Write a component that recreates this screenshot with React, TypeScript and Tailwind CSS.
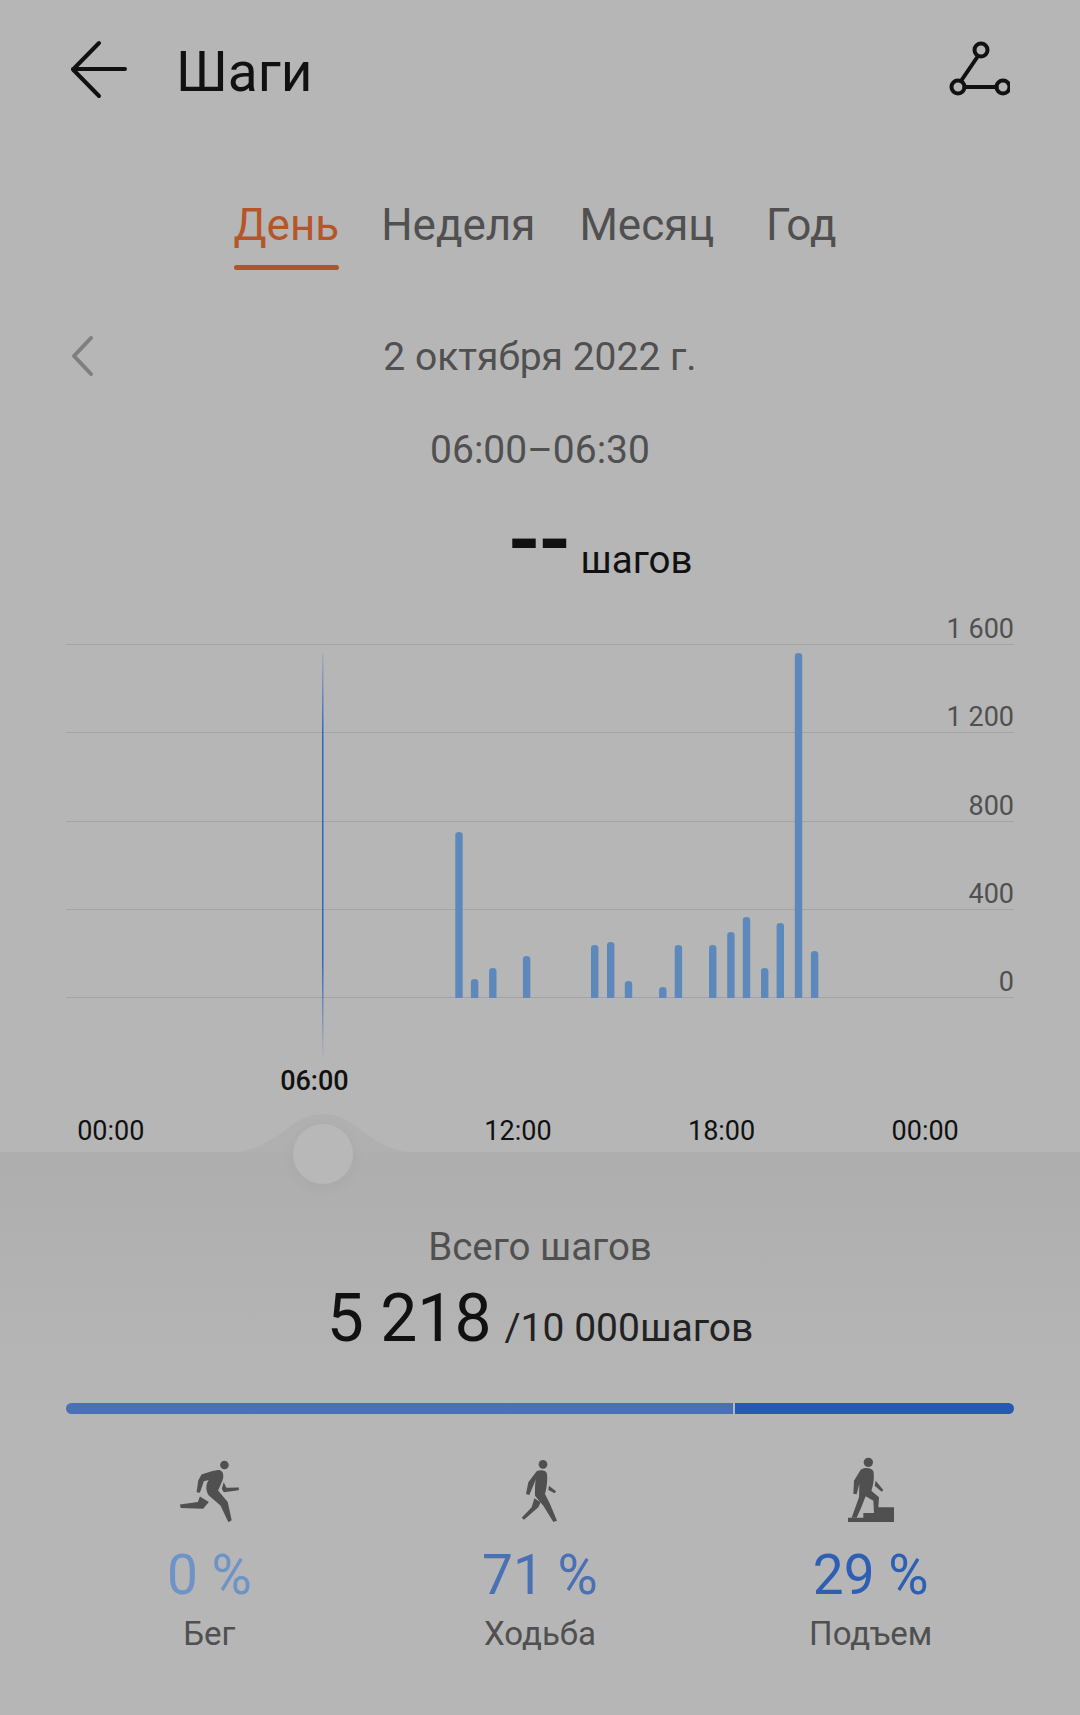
const bars: [number, number][] = [
  [459, 832], [474.6, 979], [492.8, 968], [526.6, 956], [594.7, 945], [610.7, 942], [628.5, 981], [662.8, 987],
  [678.4, 945], [712.7, 945], [730.9, 932], [746.5, 917], [764.7, 968], [780.3, 923], [798.5, 653], [814.6, 951],
];

const yLabels = ["1 600", "1 200", "800", "400", "0"];

function BackIcon() {
  return (
    <svg width="60" height="60" viewBox="70 40 60 60" fill="none" stroke="#111" strokeWidth="4" strokeLinecap="round" strokeLinejoin="round">
      <path d="M99 43 L73 69.5 L99 96 M73 69 H125" />
    </svg>
  );
}

function RouteIcon() {
  return (
    <svg width="62" height="62" viewBox="950 38 62 62" fill="none" stroke="#111" strokeWidth="4" strokeLinecap="round">
      <circle cx="983" cy="50" r="6.5" />
      <circle cx="960" cy="87" r="6.5" />
      <circle cx="1005" cy="87" r="6.5" />
      <path d="M980 56 L963 81 M966.5 87 H998.5" />
    </svg>
  );
}

function RunIcon() {
  return (
    <svg width="61" height="63" viewBox="115 58 184 190" fill="#505050">
      <circle cx="252" cy="73" r="13" />
      <path d="M183 102 C200 95 225 88 236 88 C248 90 252 105 246 120 L233 150 L262 185 L274 240 L264 246 L240 195 L205 165 C195 150 195 130 205 118 L190 122 L178 157 L168 155 L173 120 Z" />
      <path d="M178 168 L205 185 L188 205 L120 203 L118 192 L172 185 Z" />
      <path d="M250 125 L258 142 L296 141 L295 149 L250 155 L244 145 Z" />
    </svg>
  );
}

function WalkIcon() {
  return (
    <svg width="37" height="64" viewBox="123 60 111 192" fill="#505050">
      <circle cx="189" cy="76" r="13" />
      <path d="M170 97 C180 92 197 93 200 102 C204 115 200 150 195 165 L210 195 L231 245 L220 249 L190 200 L165 170 C165 150 165 130 168 120 L148 168 L138 165 L145 130 Z" />
      <path d="M163 178 L182 190 L175 205 L132 242 L125 236 L155 205 Z" />
      <path d="M207 140 L228 157 L224 163 L205 153 Z" />
    </svg>
  );
}

function ClimbIcon() {
  return (
    <svg width="48" height="66" viewBox="1100 54 142 198" fill="#505050">
      <circle cx="1163" cy="70" r="14" />
      <path d="M1140 92 C1150 85 1172 85 1178 97 C1182 115 1178 140 1172 155 L1195 175 L1192 222 L1180 222 L1178 185 L1155 172 L1142 205 L1128 236 L1113 236 L1135 175 L1136 135 L1128 166 L1118 164 L1120 125 Z" />
      <path d="M1185 125 L1208 153 L1203 158 L1182 140 Z" />
      <path d="M1102 236 H1148 V222 H1185 V205 H1240 V249 H1102 Z" />
    </svg>
  );
}

export default function App() {
  return (
    <div className="w-[1080px] h-[1715px] overflow-hidden bg-[#b6b6b6] flex flex-col font-['Roboto',sans-serif] text-[#505050]">
      <header className="h-[140px] flex items-center justify-between pl-[70px] pr-[70px]">
        <div className="flex items-center gap-[46px]">
          <BackIcon />
          <h1 className="mt-[4px] text-[55px] leading-[60px] text-[#111] font-normal">Шаги</h1>
        </div>
        <div className="-mt-[2px]"><RouteIcon /></div>
      </header>

      <nav className="mt-[61px] pr-[10px] flex justify-center text-[44px] leading-[49px]">
        <div className="flex flex-col gap-[15px]">
          <span className="text-[#b5562a]">День</span>
          <div className="h-[5px] rounded-full bg-[#b0552a]" />
        </div>
        <span className="ml-[42px]">Неделя</span>
        <span className="ml-[44px]">Месяц</span>
        <span className="ml-[51.5px]">Год</span>
      </nav>

      <div className="relative mt-[62px] text-center text-[39px] leading-[50px]">
        <svg className="absolute left-[70px] top-[3px]" width="26" height="42" viewBox="0 0 26 42" fill="none" stroke="#7f7f7f" strokeWidth="4" strokeLinecap="round" strokeLinejoin="round">
          <path d="M21 3 L4 21 L21 39" />
        </svg>
        2 октября 2022 г.
      </div>
      <div className="mt-[43px] text-center text-[39px] leading-[50px]">06:00–06:30</div>

      <div className="h-[96px] mt-[29px] flex justify-center items-baseline pl-[120px] text-[#111]">
        <span className="relative -top-[4px] text-[85px] leading-[80px] font-bold tracking-[-3px]">--</span>
        <span className="ml-[12px] text-[38.5px] leading-[50px]">шагов</span>
      </div>

      <div className="relative mx-[66px]">
        {yLabels.map((label, i) => (
          <div key={label} className={`${i === 0 ? "h-[45px]" : "h-[88.25px]"} flex items-end justify-end border-b border-[#a4a4a4] text-[27px] leading-[30px]`}>
            {label}
          </div>
        ))}
        <svg className="absolute left-0 top-0 overflow-visible" width="948" height="460" viewBox="66 600 948 460">
          <defs>
            <linearGradient id="cursor" x1="0" y1="0" x2="0" y2="1">
              <stop offset="0" stopColor="#2f66c0" stopOpacity="0.1" />
              <stop offset="0.2" stopColor="#2f66c0" />
              <stop offset="0.75" stopColor="#2f66c0" />
              <stop offset="1" stopColor="#2f66c0" stopOpacity="0" />
            </linearGradient>
          </defs>
          <rect x="322" y="653" width="1.5" height="407" fill="url(#cursor)" />
          {bars.map(([x, top]) => (
            <path key={x} d={`M${x - 3.7} 998 V${top + 3} Q${x - 3.7} ${top} ${x} ${top} Q${x + 3.7} ${top} ${x + 3.7} ${top + 3} V998 Z`} fill="#5d88bb" />
          ))}
        </svg>
      </div>

      <div className="mt-[58px] ml-[9px] w-[1018px] grid grid-cols-5 text-center text-[27px] leading-[50px] text-[#111]">
        <span className="col-start-2 font-medium">06:00</span>
      </div>
      <div className="ml-[9px] w-[1018px] h-[46px] grid grid-cols-5 text-center text-[27px] leading-[50px] text-[#111]">
        <span>00:00</span>
        <span />
        <span>12:00</span>
        <span>18:00</span>
        <span>00:00</span>
      </div>

      <section className="relative flex-1 bg-gradient-to-b from-[#aeaeae] to-[#b6b6b6] to-[45%]">
        <svg className="absolute left-[225px] -top-[39px]" width="196" height="40" viewBox="0 0 196 40" fill="#b0b0b0">
          <path d="M0 40 C25 40 40 31 55 21 C70 10 80 1 98 1 C116 1 126 10 141 21 C156 31 171 40 196 40 Z" />
        </svg>
        <div className="absolute left-[293px] -top-[28px] w-[60px] h-[60px] rounded-full bg-[#b8b8b8] shadow-[0_4px_16px_rgba(0,0,0,0.04)]" />

        <div className="pt-[70px] text-center text-[38.5px] leading-[50px]">Всего шагов</div>
        <div className="mt-[9px] flex justify-center items-baseline text-[#111]">
          <span className="text-[66px] leading-[76px]">5 218</span>
          <span className="ml-[13px] text-[39px] leading-[40px] text-[#222]">/10 000шагов</span>
        </div>

        <div className="mt-[46px] mx-[66px] h-[11px] flex gap-[2px] overflow-hidden rounded-full">
          <div className="w-[667px] bg-[#4a70b5]" />
          <div className="flex-1 bg-[#2658b4]" />
        </div>

        <div className="mt-[43px] px-[44px] grid grid-cols-3 text-center">
          <div className="flex flex-col items-center">
            <div className="h-[66px] flex items-end"><RunIcon /></div>
            <div className="mt-[20px] text-[55px] leading-[64px] text-[#6e93c6]">0 %</div>
            <div className="mt-[7px] text-[33px] leading-[40px]">Бег</div>
          </div>
          <div className="flex flex-col items-center">
            <div className="h-[66px] flex items-end"><WalkIcon /></div>
            <div className="mt-[20px] text-[55px] leading-[64px] text-[#4a70b5]">71 %</div>
            <div className="mt-[7px] text-[33px] leading-[40px]">Ходьба</div>
          </div>
          <div className="flex flex-col items-center">
            <div className="h-[66px] flex items-end"><ClimbIcon /></div>
            <div className="mt-[20px] text-[55px] leading-[64px] text-[#2d5fb5]">29 %</div>
            <div className="mt-[7px] text-[33px] leading-[40px]">Подъем</div>
          </div>
        </div>
      </section>
    </div>
  );
}
